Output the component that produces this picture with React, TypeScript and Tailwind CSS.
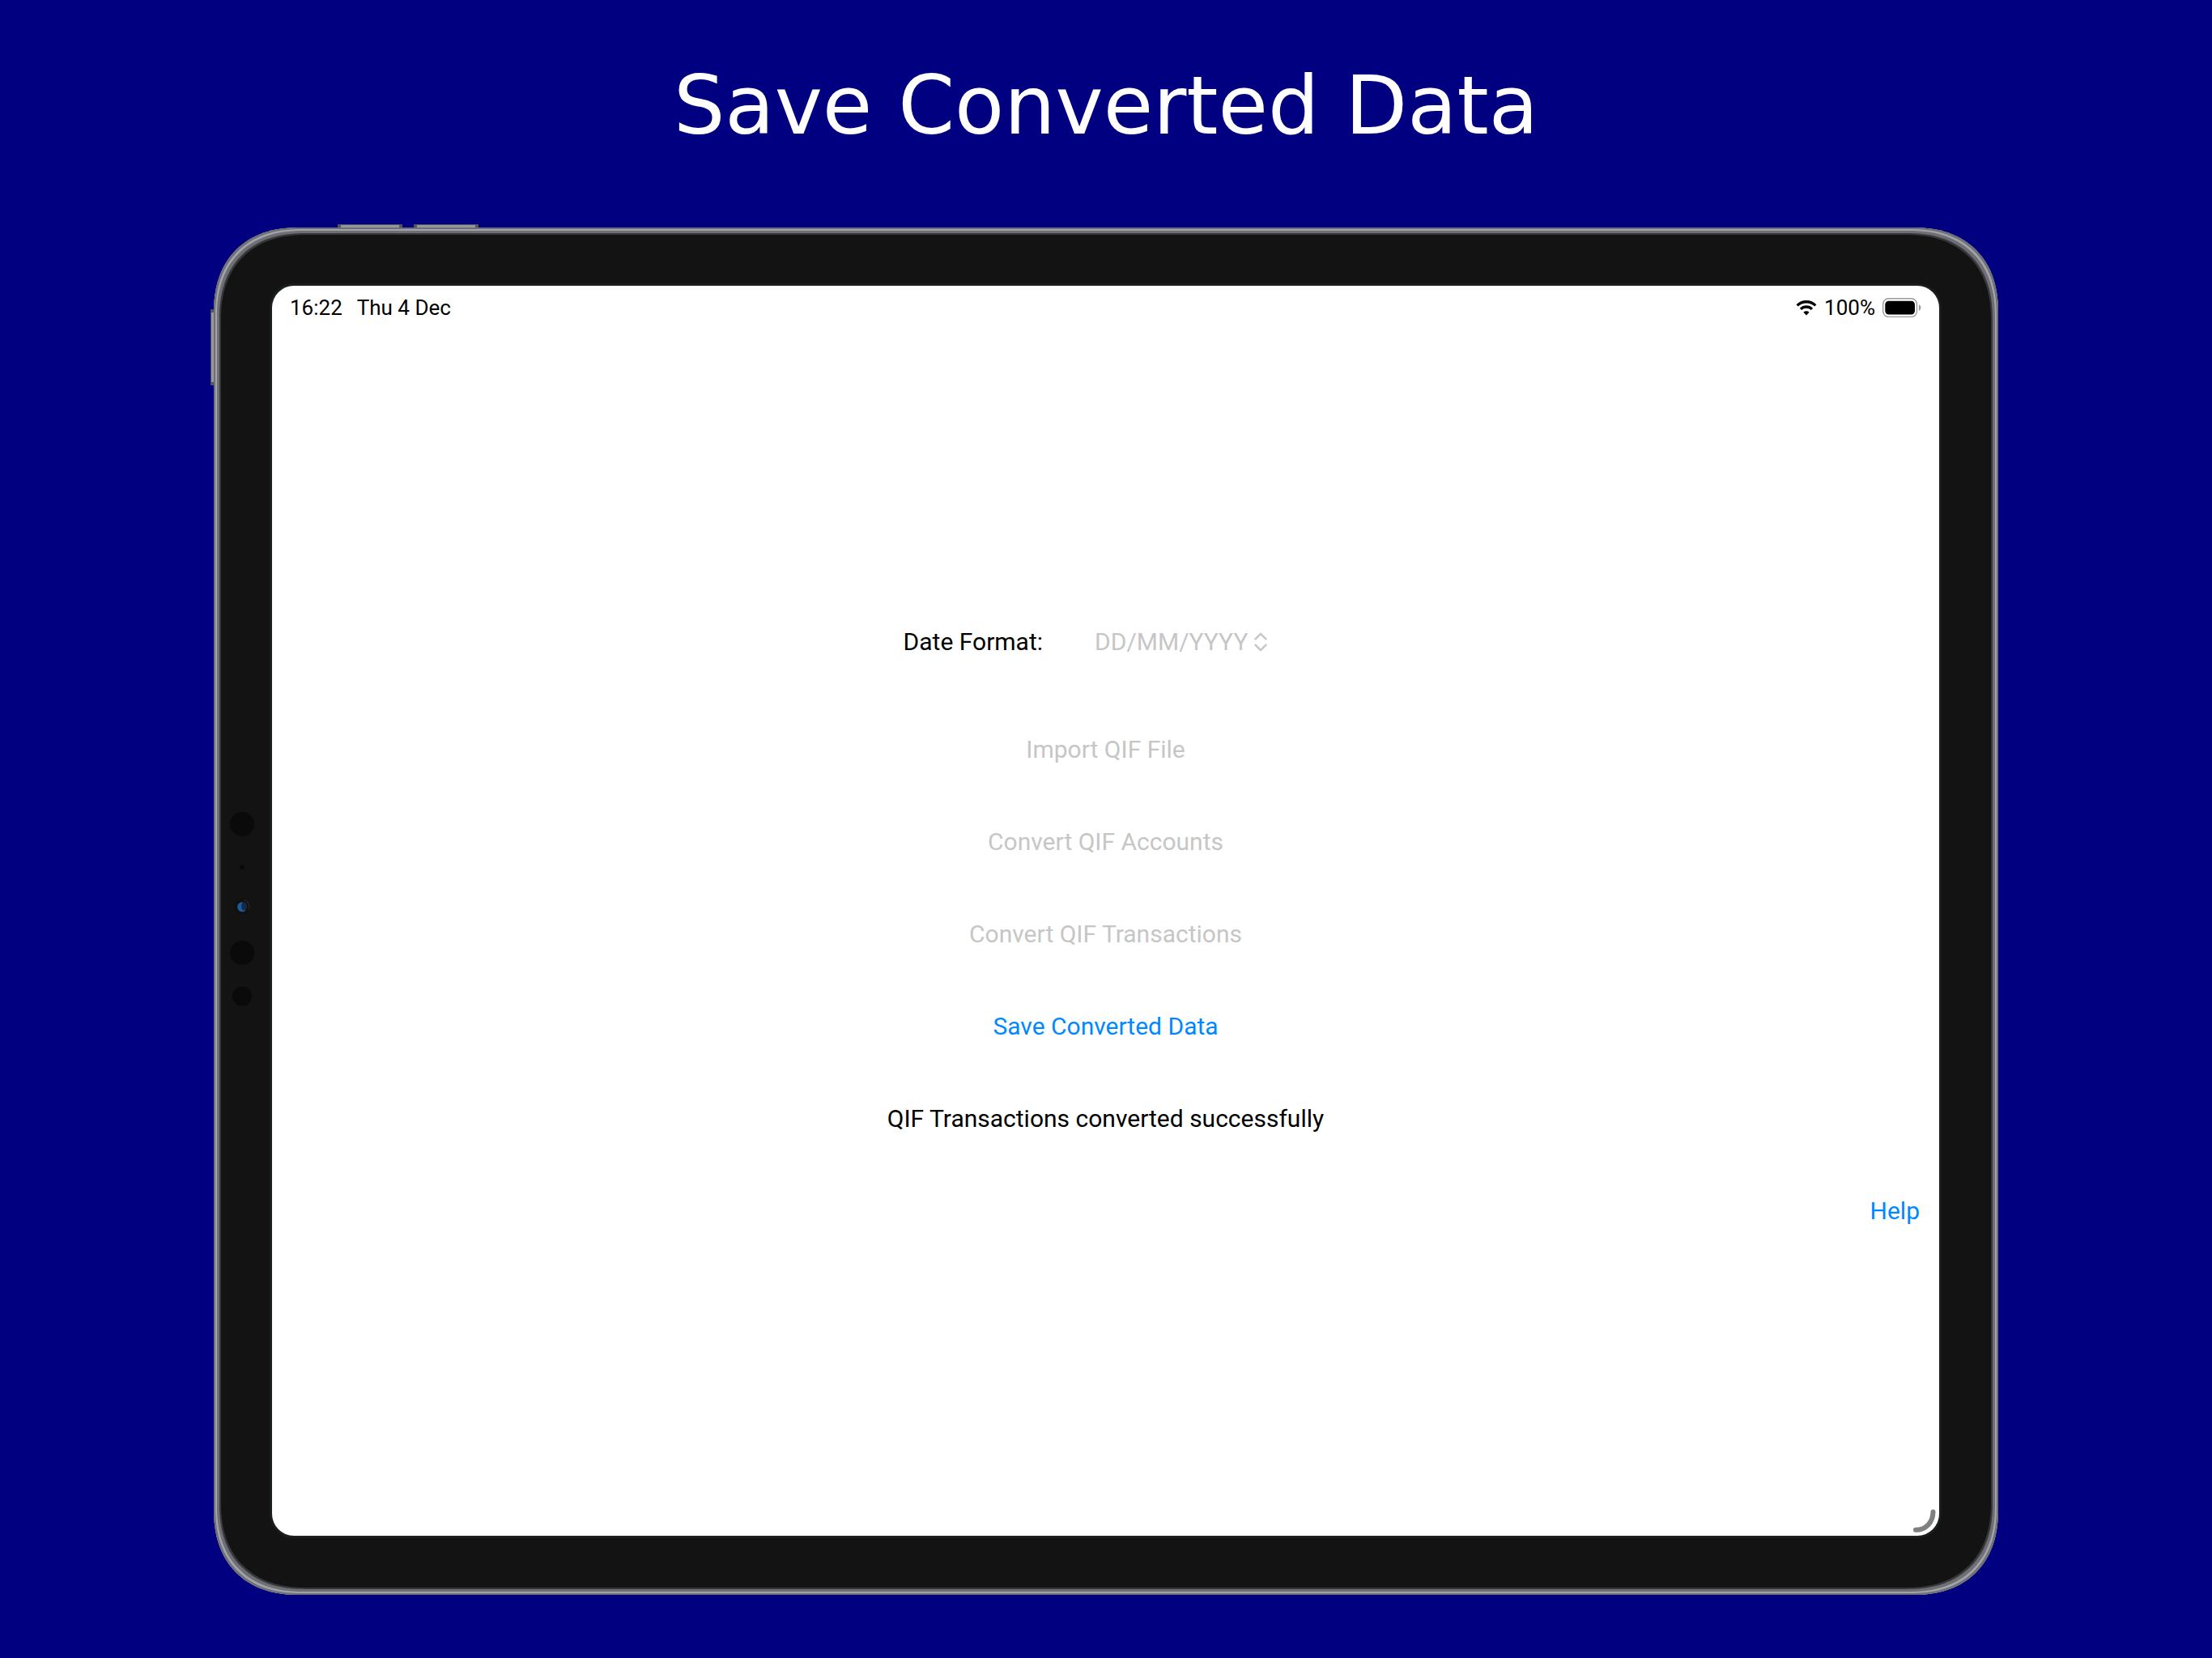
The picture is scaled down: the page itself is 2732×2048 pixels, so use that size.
import type { ReactNode } from "react";

const sans = "font-['Roboto','Liberation_Sans',sans-serif]";

function WifiIcon() {
  return (
    <svg className="h-5 w-[26px]" viewBox="0 0 26 20" fill="none" stroke="#000" strokeWidth="3.4" aria-hidden="true">
      <path d="M1.7 7.4a16 16 0 0 1 22.6 0" />
      <path d="M6 11.9a9.9 9.9 0 0 1 14 0" />
      <path d="M13 19.500l-3.6-3.7a5.1 5.1 0 0 1 7.2 0z" fill="#000" stroke="none" />
    </svg>
  );
}

function BatteryIcon() {
  return (
    <svg className="h-6 w-12" viewBox="0 0 48 24" fill="none" aria-hidden="true">
      <rect x="0.7" y="0.7" width="41.8" height="22.8" rx="7" stroke="#9a9a9a" strokeWidth="1.4" />
      <rect x="3.3" y="3.7" width="36.7" height="16.8" rx="4.5" fill="#000" />
      <path d="M45 8.3c3.2 1.4 3.2 6.2 0 7.6z" fill="#9a9a9a" />
    </svg>
  );
}

function Sensors() {
  return (
    <svg className="h-[250px] w-10" viewBox="0 0 40 250" aria-hidden="true">
      <circle cx="20" cy="18" r="15" fill="#0a0a0a" />
      <circle cx="20" cy="71.5" r="3" fill="#0a0a0a" />
      <circle cx="20" cy="120" r="10" fill="#101010" />
      <path d="M22 111.5a8.5 8.5 0 0 1 6 12" fill="none" stroke="#242424" strokeWidth="1.6" />
      <circle cx="20.3" cy="120" r="6" fill="#12294a" />
      <path d="M20.5 114.3a6 6 0 1 0 4 10.2c-3.500.4-5.500-1.200-5.200-4.200 0-2.500.2-4 1.200-6z" fill="#1f5a98" />
      <circle cx="20" cy="177" r="15" fill="#0a0a0a" />
      <circle cx="20" cy="230.5" r="12" fill="#0a0a0a" />
    </svg>
  );
}

function Row({ children, end = false }: { children: ReactNode; end?: boolean }) {
  return <div className={`flex h-[114px] items-center ${end ? "justify-end pr-6" : "justify-center"}`}>{children}</div>;
}

function DateFormatRow() {
  return (
    <div className="flex h-[152px] items-center justify-center gap-16 pr-[50px]">
      <label htmlFor="date-format">Date Format:</label>
      <div className="flex items-center gap-2 text-[#c6c6c6]">
        <select
          id="date-format"
          disabled
          className="appearance-none bg-transparent opacity-100 [field-sizing:content]"
        >
          <option>DD/MM/YYYY</option>
        </select>
        <svg className="h-6 w-4" viewBox="0 0 16 24" fill="none" stroke="currentColor" strokeWidth="2.4" strokeLinecap="round" strokeLinejoin="round" aria-hidden="true">
          <path d="M1.500 8.300l6.500-6.500 6.500 6.500M1.500 15.700l6.500 6.500 6.500-6.500" />
        </svg>
      </div>
    </div>
  );
}

function StatusBar() {
  return (
    <header className="flex h-[54px] items-center justify-between px-[22px] text-[26px] leading-8">
      <div className="flex gap-[18px]">
        <time>16:22</time>
        <span>Thu 4 Dec</span>
      </div>
      <div className="flex items-center gap-[9px]">
        <WifiIcon />
        <span>100%</span>
        <BatteryIcon />
      </div>
    </header>
  );
}

function Screen() {
  return (
    <div className={`relative flex flex-1 flex-col rounded-[27px] bg-white text-black shadow-[0_0_0_1px_#1c2321,0_0_0_3px_#191d1c] ${sans}`}>
      <StatusBar />
      <main className="flex flex-1 flex-col justify-center pb-[34px] text-[30px] leading-10">
        <DateFormatRow />
        <Row>
          <button disabled className="text-[#c6c6c6]">Import QIF File</button>
        </Row>
        <Row>
          <button disabled className="text-[#c6c6c6]">Convert QIF Accounts</button>
        </Row>
        <Row>
          <button disabled className="text-[#c6c6c6]">Convert QIF Transactions</button>
        </Row>
        <Row>
          <button className="text-[#0088ff]">Save Converted Data</button>
        </Row>
        <Row>
          <p role="status">QIF Transactions converted successfully</p>
        </Row>
        <Row end>
          <button className="text-[#0088ff]">Help</button>
        </Row>
      </main>
      <svg className="absolute right-1 bottom-0.5 h-8 w-8" viewBox="0 0 32 32" fill="none" stroke="#808080" strokeWidth="6" strokeLinecap="round" aria-hidden="true">
        <path d="M28.500 4.500C28.500 17 20 26.800 7 26.800" />
      </svg>
    </div>
  );
}

const key = "absolute border border-[#55565b] bg-[#96979e]";

function Tablet() {
  return (
    <div className="relative flex flex-1">
      <span className={`${key} -top-1 left-[153px] h-2 w-20 border-x-4`} />
      <span className={`${key} -top-1 left-[247px] h-2 w-20 border-x-4`} />
      <span className={`${key} top-[101px] -left-1 h-[94px] w-2 border-y-4`} />
      <div className="relative flex flex-1 rounded-[106px] bg-[#131313] pt-[72px] pr-[73px] pb-[73px] shadow-[inset_0_0_0_2px_#6f7076,inset_0_0_0_4px_#a2a2aa,inset_0_0_0_7px_#6e6f74,inset_0_0_0_9px_#363739] [corner-shape:superellipse(1.2)]">
        <div className="flex w-[72px] shrink-0 items-center pl-[15px]">
          <Sensors />
        </div>
        <Screen />
      </div>
    </div>
  );
}

export default function App() {
  return (
    <div className="flex min-h-screen flex-col bg-[#000080] px-[264px] pb-[78px]">
      <h1 className="pt-[71px] pb-[90px] text-center font-['DejaVu_Sans',Verdana,sans-serif] text-[100px] leading-[120px] text-white">
        Save Converted Data
      </h1>
      <Tablet />
    </div>
  );
}
